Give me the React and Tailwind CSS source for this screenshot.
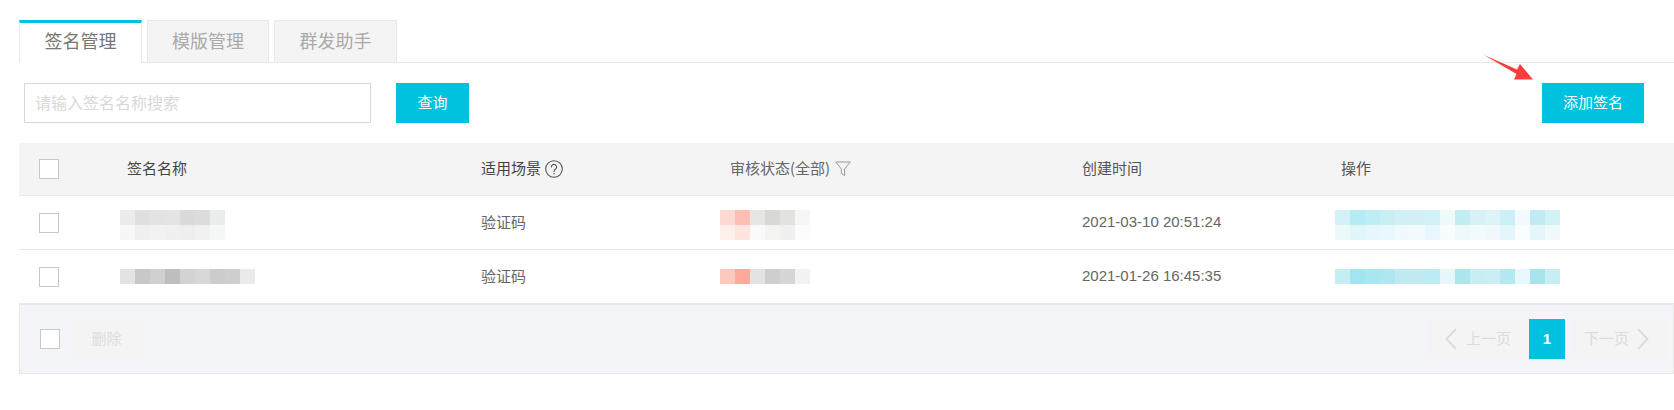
const FONT = "font-['Noto_Sans_CJK_SC','Microsoft_YaHei',sans-serif]";

const Mosaic = ({ rows }) => (
  <div className="flex flex-col">
    {rows.map((r, i) => (
      <div key={i} className="flex h-[15px]">
        {r.map((c, j) => (
          <div key={j} className={`w-[15px] h-full ${c}`} />
        ))}
      </div>
    ))}
  </div>
);

const Box = () => <div className="w-5 h-5 border border-[#c8c8c8] bg-white shrink-0" />;

const cols = "grid grid-cols-[88px_354px_249px_352px_259px_1fr] items-center pl-5";

const name1 = [
  ["bg-[#ececec]", "bg-[#dfdfdf]", "bg-[#e3e3e3]", "bg-[#e4e4e3]", "bg-[#dadada]", "bg-[#dcdcdc]", "bg-[#ebeded]"],
  ["bg-[#f7f7f7]", "bg-[#f0f0f0]", "bg-[#f2f2f2]", "bg-[#f0f0f0]", "bg-[#eeeeee]", "bg-[#f1f1f1]", "bg-[#f5f6f6]"],
];
const name2 = [
  ["bg-[#e3e3e3]", "bg-[#c8c8c8]", "bg-[#d0d0d0]", "bg-[#bebebe]", "bg-[#d2d3d4]", "bg-[#d8d8d6]", "bg-[#cccccc]", "bg-[#cecece]", "bg-[#e9ebea]"],
];
const stat1 = [
  ["bg-[#fdd9d3]", "bg-[#fdbfb4]", "bg-[#e6e6e4]", "bg-[#d8d8d6]", "bg-[#e2e2e0]", "bg-[#f5f6f8]"],
  ["bg-[#feefeb]", "bg-[#fee5df]", "bg-[#fafafa]", "bg-[#f3f3f2]", "bg-[#f0f0f0]", "bg-[#fbfcfc]"],
];
const stat2 = [
  ["bg-[#fcc9bf]", "bg-[#fdaa9b]", "bg-[#e4e3e1]", "bg-[#cfcecc]", "bg-[#d6d6d4]", "bg-[#f1f2f4]"],
];
const op1 = [
  ["bg-[#d3f2f7]", "bg-[#b5ebf5]", "bg-[#bfedf6]", "bg-[#c9eef4]", "bg-[#d0f0f6]", "bg-[#d2eff5]", "bg-[#d2f1f6]", "bg-[#effafb]", "bg-[#c2edf2]", "bg-[#d7f1f6]", "bg-[#dcf3f7]", "bg-[#cbf1f6]", "bg-[#f1fafc]", "bg-[#c2eaf2]", "bg-[#d2f1f6]"],
  ["bg-[#ebf9fb]", "bg-[#e0f6f9]", "bg-[#e6f7fa]", "bg-[#e9f8fb]", "bg-[#effafc]", "bg-[#f1fafc]", "bg-[#e8f7fb]", "bg-[#f7fcfd]", "bg-[#eef9fb]", "bg-[#f1fafc]", "bg-[#eff9fc]", "bg-[#e4f6fa]", "bg-[#f8fdfd]", "bg-[#e5f6fa]", "bg-[#f0fafc]"],
];
const op2 = [
  ["bg-[#c3eef4]", "bg-[#a0e5f0]", "bg-[#a9e6f0]", "bg-[#aee7f1]", "bg-[#bfeaf2]", "bg-[#c1e9f1]", "bg-[#bbebf3]", "bg-[#e6f7fa]", "bg-[#ade5ec]", "bg-[#c9edf4]", "bg-[#cbeef4]", "bg-[#b3e9f2]", "bg-[#e8f7fb]", "bg-[#a8e3ee]", "bg-[#c7eef5]"],
];

const Row = ({ name, stat, op, time, shift }) => (
  <div className={`${cols} h-[54px] border-b border-[#e8e8e8] text-[15px] text-[#666666]`}>
    <Box />
    <div className={`-ml-[7px] ${shift}`}><Mosaic rows={name} /></div>
    <div>验证码</div>
    <div className={`-ml-[10px] ${shift}`}><Mosaic rows={stat} /></div>
    <div className="font-['Liberation_Sans',sans-serif]">{time}</div>
    <div className={`-ml-[6px] ${shift}`}><Mosaic rows={op} /></div>
  </div>
);

export default function App() {
  return (
    <div className={`relative w-[1674px] h-[410px] bg-white overflow-hidden pl-[19px] pt-5 ${FONT}`}>
      <div className="flex items-start h-[43px] border-b border-[#e8e8e8] text-[18px] leading-[38px]">
        <div className="w-[123px] h-[43px] border-t-[3px] border-x border-t-[#00c1de] border-x-[#e8e8e8] border-b-0 bg-white text-[#777777] text-center leading-[35px]">签名管理</div>
        <div className="ml-[5px] w-[122px] h-[42px] border border-b-0 border-[#e8e8e8] bg-[#f4f4f4] text-[#aaaaaa] text-center">模版管理</div>
        <div className="ml-[5px] w-[123px] h-[42px] border border-b-0 border-[#e8e8e8] bg-[#f4f4f4] text-[#aaaaaa] text-center">群发助手</div>
      </div>

      <div className="flex items-center h-10 mt-5 pl-[5px] pr-[30px]">
        <div className="w-[347px] h-10 border border-[#d8d8d8] flex items-center pl-[10px] pb-[2px] text-base text-[#d8d8d8]">请输入签名名称搜索</div>
        <button className="ml-[25px] w-[73px] h-10 pb-[2px] bg-[#00c1de] text-white text-[15px]">查询</button>
        <button className="ml-auto w-[102px] h-10 pb-[2px] bg-[#00c1de] text-white text-[15px]">添加签名</button>
      </div>

      <div className={`${cols} h-[53px] mt-5 bg-[#f4f4f4] border-b border-[#e8e8e8] text-[15px] text-[#444444]`}>
        <Box />
        <div className="pb-[2px]">签名名称</div>
        <div className="flex items-center gap-1">
          <span className="pb-[2px]">适用场景</span>
          <svg width="18" height="18" viewBox="0 0 18 18" fill="none" stroke="#555555" strokeWidth="1.1">
            <circle cx="9" cy="9" r="8.3" />
            <path d="M6.4 7a2.6 2.6 0 1 1 3.9 2.3c-.9.5-1.3 1-1.3 2.1" strokeLinecap="round" />
            <circle cx="9" cy="13.7" r=".7" fill="#555555" stroke="none" />
          </svg>
        </div>
        <div className="flex items-center gap-[5px] text-[#666666]">
          <span className="pb-[2px]">审核状态(全部)</span>
          <svg width="16" height="16" viewBox="0 0 16 16" fill="none" stroke="#999999" strokeWidth="1">
            <path d="M.8 1h14.4L9.6 8v6.6L6.4 12.6V8z" />
          </svg>
        </div>
        <div className="pb-[2px] text-[#555555]">创建时间</div>
        <div className="pb-[2px] text-[#555555]">操作</div>
      </div>

      <Row name={name1} stat={stat1} op={op1} time="2021-03-10 20:51:24" shift="mt-1" />
      <Row name={name2} stat={stat2} op={op2} time="2021-01-26 16:45:35" shift="" />

      <div className="flex items-center h-[70px] border border-[#e8e8e8] bg-[#f4f5f8] pl-5 pr-[5px] text-[15px] text-[#dcdcdc]">
        <Box />
        <div className="ml-[10px] w-[73px] h-10 pb-[2px] bg-[#f4f4f4] flex items-center justify-center">删除</div>
        <div className="ml-auto flex items-center">
          <div className="w-[102px] h-10 bg-[#f4f4f4] flex items-center pl-[18px]">
            <svg width="12" height="22" viewBox="0 0 12 22" fill="none" stroke="#dcdcdc" strokeWidth="2">
              <path d="M11 1 1.5 11 11 21" />
            </svg>
            <span className="ml-[9px] pb-[2px]">上一页</span>
          </div>
          <div className="w-9 h-10 bg-[#00c1de] text-white font-bold flex items-center justify-center font-['Liberation_Sans',sans-serif]">1</div>
          <div className="ml-[6px] w-[97px] h-10 bg-[#f4f4f4] flex items-center pl-[13px]">
            <span className="pb-[2px]">下一页</span>
            <svg className="ml-[8px]" width="12" height="22" viewBox="0 0 12 22" fill="none" stroke="#dcdcdc" strokeWidth="2">
              <path d="M1 1l9.5 10L1 21" />
            </svg>
          </div>
        </div>
      </div>

      <svg className="absolute left-[1483px] top-[54px]" width="52" height="28" viewBox="0 0 52 28">
        <path d="M1 1 L34 15.5 L37 10 L50 25.5 L31 25.5 L33.5 20 Z" fill="#fe3c3c" />
      </svg>
    </div>
  );
}
